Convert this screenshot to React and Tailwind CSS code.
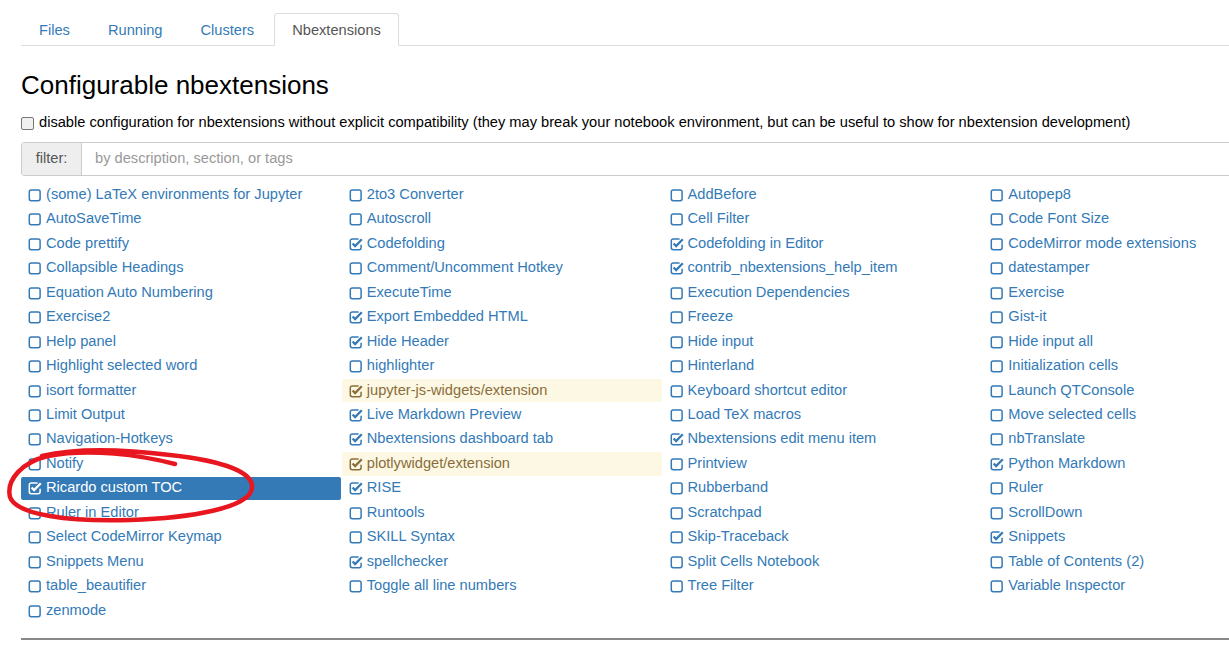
const items = [
  ['(some) LaTeX environments for Jupyter'], ['2to3 Converter'], ['AddBefore'], ['Autopep8'],
  ['AutoSaveTime'], ['Autoscroll'], ['Cell Filter'], ['Code Font Size'],
  ['Code prettify'], ['Codefolding', 'on'], ['Codefolding in Editor', 'on'], ['CodeMirror mode extensions'],
  ['Collapsible Headings'], ['Comment/Uncomment Hotkey'], ['contrib_nbextensions_help_item', 'on'], ['datestamper'],
  ['Equation Auto Numbering'], ['ExecuteTime'], ['Execution Dependencies'], ['Exercise'],
  ['Exercise2'], ['Export Embedded HTML', 'on'], ['Freeze'], ['Gist-it'],
  ['Help panel'], ['Hide Header', 'on'], ['Hide input'], ['Hide input all'],
  ['Highlight selected word'], ['highlighter'], ['Hinterland'], ['Initialization cells'],
  ['isort formatter'], ['jupyter-js-widgets/extension', 'warn'], ['Keyboard shortcut editor'], ['Launch QTConsole'],
  ['Limit Output'], ['Live Markdown Preview', 'on'], ['Load TeX macros'], ['Move selected cells'],
  ['Navigation-Hotkeys'], ['Nbextensions dashboard tab', 'on'], ['Nbextensions edit menu item', 'on'], ['nbTranslate'],
  ['Notify'], ['plotlywidget/extension', 'warn'], ['Printview'], ['Python Markdown', 'on'],
  ['Ricardo custom TOC', 'sel'], ['RISE', 'on'], ['Rubberband'], ['Ruler'],
  ['Ruler in Editor'], ['Runtools'], ['Scratchpad'], ['ScrollDown'],
  ['Select CodeMirror Keymap'], ['SKILL Syntax'], ['Skip-Traceback'], ['Snippets', 'on'],
  ['Snippets Menu'], ['spellchecker', 'on'], ['Split Cells Notebook'], ['Table of Contents (2)'],
  ['table_beautifier'], ['Toggle all line numbers'], ['Tree Filter'], ['Variable Inspector'],
  ['zenmode'],
]

function Box({ checked }) {
  return (
    <svg width="14" height="14" viewBox="0 0 14 14" className="shrink-0">
      {checked ? (
        <>
          <path d="M9.6 1.9H3.2a1.9 1.9 0 0 0-1.9 1.9v7a1.9 1.9 0 0 0 1.9 1.9h7a1.9 1.9 0 0 0 1.9-1.9V7.8" fill="none" stroke="currentColor" strokeWidth="1.5" />
          <path d="M3.6 6.5 L6.1 9 L12.8 2.3" fill="none" stroke="currentColor" strokeWidth="2.3" />
        </>
      ) : (
        <rect x="1.3" y="1.9" width="10.8" height="10.8" rx="1.9" fill="none" stroke="currentColor" strokeWidth="1.5" />
      )}
    </svg>
  )
}

export default function App() {
  const tabs = ['Files', 'Running', 'Clusters']
  return (
    <div className="relative w-[1229px] h-[650px] overflow-hidden bg-white font-['Liberation_Sans',Arial,sans-serif] text-[14.65px] text-[#333]">
      <div className="w-[1320px] pl-[21px] pt-[13px]">
        {/* tabs */}
        <div className="flex border-b border-[#ddd]">
          {tabs.map(t => (
            <div key={t} className="px-[18px] mr-[2px] h-[32px] pt-[3px] flex items-center text-[#337ab7]">{t}</div>
          ))}
          <div className="px-[17px] h-[33px] pt-[2px] -mb-px flex items-center border border-[#ddd] border-b-white bg-white rounded-t-[3px] text-[#555]">Nbextensions</div>
        </div>

        <h1 className="mt-[25px] text-[26px] leading-[28px] text-black">Configurable nbextensions</h1>

        <div className="mt-[14px] h-[20px] flex items-center gap-[5px] text-black">
          <span className="w-[13px] h-[13px] rounded-[2px] border border-[#767676] bg-[#f0f0f0] inline-block" />
          <span>disable configuration for nbextensions without explicit compatibility (they may break your notebook environment, but can be useful to show for nbextension development)</span>
        </div>

        {/* filter */}
        <div className="mt-[9px] flex h-[34px] w-[1283px] border border-[#ccc] rounded-[3px]">
          <div className="w-[60px] flex items-center justify-center bg-[#eee] border-r border-[#ccc] text-[#555]">filter:</div>
          <div className="flex-1 flex items-center pl-[13px] text-[#999]">by description, section, or tags</div>
        </div>

        {/* extension list */}
        <div className="mt-[7px] grid grid-cols-4 w-[1283px] auto-rows-[24.47px]">
          {items.map(([name, state]) => {
            const cls = state === 'sel'
              ? 'bg-[#337ab7] text-white rounded-[2px]'
              : state === 'warn'
                ? 'bg-[#fcf8e3] text-[#8a6d3b] rounded-[2px]'
                : 'text-[#337ab7]'
            return (
              <div key={name} className={`flex items-center gap-[4px] pl-[7px] mr-[1px] h-[23.5px] ${cls}`}>
                <Box checked={!!state} />
                <span className="whitespace-nowrap">{name}</span>
              </div>
            )
          })}
        </div>

        <div className="mt-[15px] w-[1283px] border-t-2 border-[#888]" />
      </div>

      {/* red hand-drawn annotation */}
      <svg className="absolute left-0 top-0 pointer-events-none" width="300" height="540" viewBox="0 0 300 540">
        <path
          d="M175 464 C140 455 90 448 48 456 C22 462 6 480 10 497 C16 515 70 522 130 520 C190 518 250 508 252 488 C254 470 215 460 170 455 C130 450 80 447 42 456"
          fill="none" stroke="#e8161f" strokeWidth="4.5" strokeLinecap="round" strokeLinejoin="round"
        />
      </svg>
    </div>
  )
}
